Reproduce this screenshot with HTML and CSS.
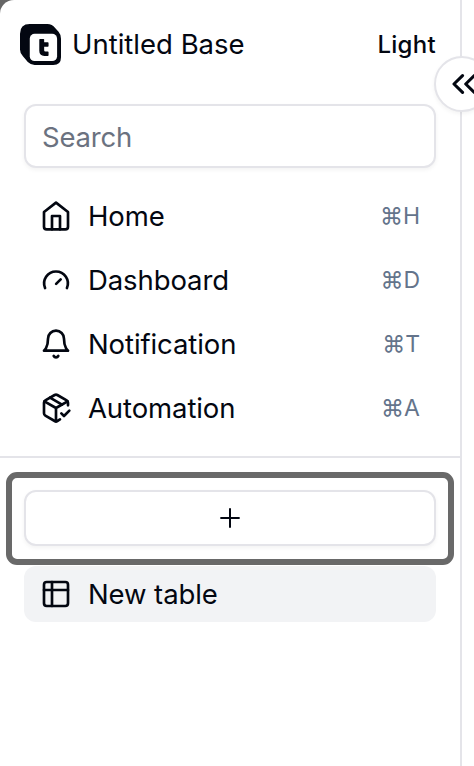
FILE: index.html
```html
<!DOCTYPE html>
<html lang="en">
<head>
<meta charset="utf-8">
<title>Untitled Base</title>
<link rel="stylesheet" href="styles.css">
</head>
<body>
<div class="window">
<aside class="sidebar">
  <header class="header">
    <svg class="logo" viewBox="0 0 42 42"><path d="M10 0H28Q33 0 36 4L39.500 8Q42 11 42 15V34Q42 42 34 42H15Q11 42 8 39L3 33Q0 30 0 26V10Q0 0 10 0Z" fill="#030711"/><rect x="10" y="10" width="28" height="28" rx="5" fill="#fff"/><path d="M20.500 16H24V19.500H28.500V22.500H24V27Q24 29 26 29H28.500V32H25Q20.500 32 20.500 27.500Z" fill="#030711" stroke="#030711" stroke-width="1.500" stroke-linejoin="round"/></svg>
    <span class="title">Untitled Base</span>
    <span class="plan">Light</span>
  </header>
  <input class="search" type="text" placeholder="Search">
  <nav class="nav">
    <a class="item"><svg class="icon" viewBox="0 0 24 24"><path d="m3 9 9-7 9 7v11a2 2 0 0 1-2 2H5a2 2 0 0 1-2-2z"/><path d="M9 22V12h6v10"/></svg><span class="label">Home</span><kbd class="keys">⌘H</kbd></a>
    <a class="item"><svg class="icon" viewBox="0 0 24 24"><path d="m12.100 14.900 3.400-3.400"/><path d="M3.800 18a8.900 8.900 0 1 1 16.400 0"/></svg><span class="label">Dashboard</span><kbd class="keys">⌘D</kbd></a>
    <a class="item"><svg class="icon" viewBox="0 0 24 24"><path d="M6 8a6 6 0 0 1 12 0c0 7 3 9 3 9H3s3-2 3-9"/><path d="M10.300 21a1.940 1.940 0 0 0 3.400 0"/></svg><span class="label">Notification</span><kbd class="keys">⌘T</kbd></a>
    <a class="item"><svg class="icon" viewBox="0 0 24 24"><path d="m16 16 2 2 4-4"/><path d="M21 10V8a2 2 0 0 0-1-1.730l-7-4a2 2 0 0 0-2 0l-7 4A2 2 0 0 0 3 8v8a2 2 0 0 0 1 1.730l7 4a2 2 0 0 0 2 0l2-1.140"/><path d="m7.500 4.270 9 5.150"/><path d="M3.290 7 12 12l8.710-5M12 22V12"/></svg><span class="label">Automation</span><kbd class="keys">⌘A</kbd></a>
  </nav>
  <section class="tables">
    <div class="highlight"><button class="add" aria-label="Add table"><svg class="icon plus" viewBox="0 0 24 24"><path d="M5.300 12h13.400M12 5.300v13.400"/></svg></button></div>
    <a class="item active"><svg class="icon" viewBox="0 0 24 24"><rect x="3" y="3" width="18" height="18" rx="2"/><path d="M3 9h18M9 3v18"/></svg><span class="label">New table</span></a>
  </section>
</aside>
<button class="collapse" aria-label="Collapse sidebar"><svg class="icon chevrons" viewBox="0 0 24 24"><path d="m12.400 18.300-6.400-6.300 6.400-6.300M21.200 18.300l-6.400-6.300 6.400-6.300"/></svg></button>
</div>
</body>
</html>
```
FILE: styles.css
```css
* { box-sizing: border-box; }
body {
  margin: 0;
  background: #666;
  color: #030711;
  font-family: Inter, "Liberation Sans", sans-serif;
  font-size: 27.500px;
  font-weight: 420;
  overflow: hidden;
}
.window {
  position: relative;
  height: 766px;
  overflow: hidden;
  background: #fff;
  border-top-left-radius: 14px;
}
.sidebar {
  width: 462px;
  height: 100%;
  border-right: 2px solid #e4e4e9;
}
.header {
  display: flex;
  align-items: center;
  height: 88px;
  padding: 0 24px 0 19.500px;
}
.logo { width: 41px; height: 41px; margin-right: 11.500px; }
.title { flex: 1; white-space: nowrap; }
.plan { font-size: 24px; font-weight: 500; letter-spacing: 0.3px; }
.search {
  display: block;
  width: 412px;
  height: 64px;
  margin: 16px 24px 20px;
  padding: 2px 16px 0;
  border: 2px solid #e4e4e9;
  border-radius: 12px;
  box-shadow: 0 2px 4px #0000000d;
  background: #fff;
  font: inherit;
  letter-spacing: -0.2px;
}
.search::placeholder { color: #6b7280; opacity: 1; }
.nav {
  display: flex;
  flex-direction: column;
  gap: 8px;
  padding: 0 24px;
}
.item {
  display: flex;
  align-items: center;
  height: 56px;
  padding: 0 16px;
  border-radius: 12px;
}
.icon {
  width: 32px;
  height: 32px;
  flex: none;
  fill: none;
  stroke: #030711;
  stroke-width: 2;
  stroke-linecap: round;
  stroke-linejoin: round;
}
.label { flex: 1; margin-left: 16px; letter-spacing: -0.1px; }
.keys {
  color: #64748b;
  font-family: inherit;
  font-size: 23px;
}
.tables {
  margin-top: 20px;
  padding-top: 14px;
  border-top: 2px solid #e4e4e9;
}
.highlight {
  width: 448px;
  height: 93px;
  margin-left: 6px;
  padding: 12px;
  border: 6px solid #696969;
  border-radius: 11px;
}
.add {
  display: flex;
  align-items: center;
  justify-content: center;
  width: 412px;
  height: 56px;
  padding: 0;
  border: 2px solid #e4e4e9;
  border-radius: 12px;
  box-shadow: 0 2px 4px #0000000d;
  background: #fff;
}
.plus { stroke-width: 1.500; }
.chevrons { stroke-width: 2.300; }
.active { margin: 1px 24px 0; background: #f2f3f5; }
.collapse {
  position: absolute;
  top: 56px;
  left: 434px;
  display: flex;
  align-items: center;
  justify-content: center;
  width: 56px;
  height: 56px;
  padding: 0;
  border: 2px solid #e4e4e9;
  border-radius: 50%;
  box-shadow: 0 2px 4px #0000000d;
  background: #fff;
}
```
